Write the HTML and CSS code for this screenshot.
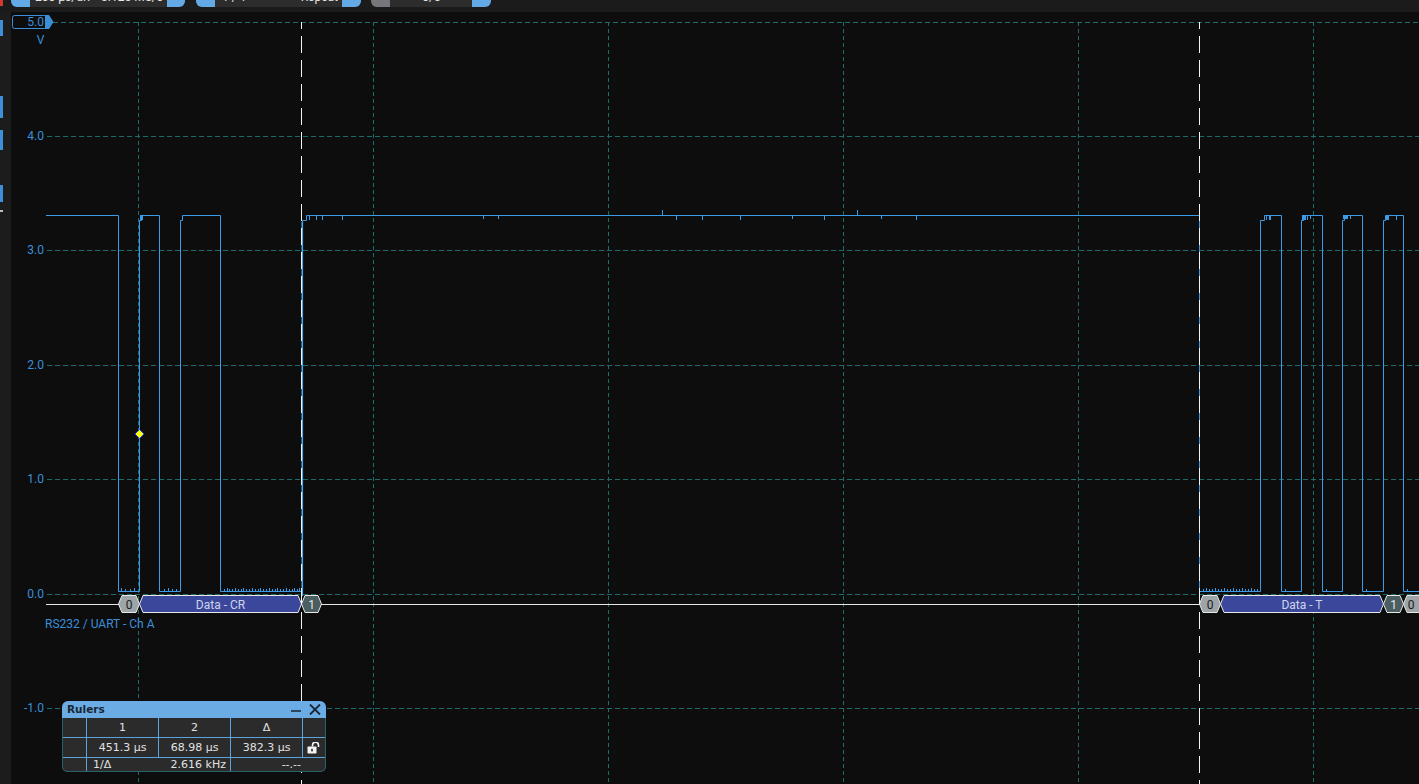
FILE: index.html
```html
<!DOCTYPE html>
<html lang="en">
<head>
<meta charset="utf-8">
<title>Scope</title>
<link rel="stylesheet" href="styles.css">
</head>
<body>
<div class="app">
  <header class="topbar">
    <span class="rec"></span>
    <div class="pill pill-1">
      <span class="cap"></span>
      <div class="pill-mid"><span>200 µs/div</span><span>3.125 MS/s</span></div>
      <span class="cap cap-r"></span>
    </div>
    <div class="pill pill-2">
      <span class="cap"></span>
      <div class="pill-mid pad-wide"><span>1 / 1</span><span>Repeat</span></div>
      <span class="cap"></span>
    </div>
    <div class="pill pill-3">
      <span class="cap cap-grey"></span>
      <div class="pill-mid center"><span>0/0</span></div>
      <span class="cap"></span>
    </div>
  </header>
  <div class="main">
    <aside class="rail">
      <span class="mark m1"></span>
      <span class="mark m2"></span>
      <span class="mark m3"></span>
      <span class="mark m4"></span>
      <span class="mark m5"></span>
    </aside>
    <section class="plot">
      <svg class="scope" width="1408" height="772" viewBox="11 12 1408 772" xmlns="http://www.w3.org/2000/svg">
        <path class="grid-h" d="M53 22.5H1419M47 136.5H1419M47 250.5H1419M47 365.5H1419M47 479.5H1419M47 594.5H1419M47 708.5H1419"/>
        <path class="grid-v" d="M138.5 22V784M373.5 22V784M608.5 22V784M843.5 22V784M1078.5 22V784M1313.5 22V784"/>

        <rect class="scale-box" x="12.5" y="15.5" width="34" height="13" rx="2"/>
        <polygon class="scale-arrow" points="45,15 49,15 53.5,22 49,29 45,29"/>
        <text class="tick-label" x="44" y="26">5.0</text>
        <text class="unit-label" x="40.5" y="44">V</text>
        <text class="tick-label" x="44" y="140">4.0</text>
        <text class="tick-label" x="44" y="254">3.0</text>
        <text class="tick-label" x="44" y="369">2.0</text>
        <text class="tick-label" x="44" y="483">1.0</text>
        <text class="tick-label" x="44" y="598">0.0</text>
        <text class="tick-label" x="44" y="712">-1.0</text>

        <path class="trace" d="M46 215.5H118.5V591.5H139.5V220.5H141.5V215.5H159.5V591.5H180.5V220.5H182.5V215.5H220.5V591.5H302.5V220.5H306.5V215.5H1199.5V591.5H1260.5V220.5H1264.5V215.5H1281.5V591.5H1301.5V220.5H1303.5V215.5H1322.5V591.5H1342.5V220.5H1344.5V215.5H1362.5V591.5H1383.5V220.5H1385.5V215.5H1403.5V591.5H1420"/>
        <path class="trace trace-bright" d="M302.3 222V596"/>
        <path class="trace" d="M309.5 215V220M316.5 215V220M322.5 215V220M342.5 215V220M483.5 215V219M498.5 215V219M662.5 215V210M676.5 215V220M702.5 215V220M740.5 215V220M792.5 215V219M824.5 215V220M857.5 215V210M881.5 215V219M916.5 215V220M1266.5 215V220M1307.5 215V220M1310.5 215V219M1350.5 215V219M1396.5 215V220M121.5 591V588M125.5 591V589M130.5 591V589M134.5 591V588M164.5 591V589M168.5 591V588M172.5 591V589M176.5 591V589M224.5 591V589M227.5 591V588M229.5 591V589M232.5 591V589M235.5 591V588M238.5 591V589M241.5 591V589M243.5 591V588M246.5 591V589M249.5 591V589M252.5 591V588M255.5 591V589M258.5 591V589M260.5 591V588M263.5 591V589M266.5 591V589M269.5 591V588M272.5 591V589M275.5 591V589M277.5 591V588M280.5 591V589M283.5 591V589M286.5 591V588M289.5 591V589M292.5 591V589M294.5 591V588M297.5 591V589M299.5 591V588M1203.5 591V589M1206.5 591V588M1209.5 591V589M1212.5 591V589M1215.5 591V588M1218.5 591V589M1221.5 591V589M1224.5 591V588M1227.5 591V589M1230.5 591V589M1233.5 591V588M1236.5 591V589M1239.5 591V589M1242.5 591V588M1245.5 591V589M1248.5 591V589M1251.5 591V588M1254.5 591V589M1257.5 591V589M1285.5 591V589M1326.5 591V589M1366.5 591V589M1407.5 591V589"/>
        <rect class="trace-fill" x="140" y="215" width="3" height="5"/>
        <rect class="trace-fill" x="1269" y="215" width="2" height="5"/>
        <rect class="trace-fill" x="1302" y="215" width="4" height="5"/>
        <rect class="trace-fill" x="1343" y="215" width="5" height="4"/>
        <rect class="trace-fill" x="1386" y="215" width="3" height="5"/>

        <path class="bus-line" d="M46 604.5H1419"/>
        <polygon class="hex hex-zero" points="118.5,604 122,595.5 136,595.5 139.5,604 136,612.5 122,612.5"/>
        <polygon class="hex hex-data" points="139.5,604 143,595.5 298,595.5 301.5,604 298,612.5 143,612.5"/>
        <polygon class="hex hex-one" points="301.5,604 305,595.5 318,595.5 321.5,604 318,612.5 305,612.5"/>
        <polygon class="hex hex-zero" points="1199.5,604 1203,595.5 1217,595.5 1220.5,604 1217,612.5 1203,612.5"/>
        <polygon class="hex hex-data" points="1220.5,604 1224,595.5 1380,595.5 1383.5,604 1380,612.5 1224,612.5"/>
        <polygon class="hex hex-one" points="1383.5,604 1387,595.5 1400,595.5 1403.5,604 1400,612.5 1387,612.5"/>
        <polygon class="hex hex-zero" points="1403.5,604 1407,595.5 1430,595.5 1430,612.5 1407,612.5"/>
        <text class="hex-text txt-zero" x="129" y="609">0</text>
        <text class="hex-text txt-data" x="220.5" y="609">Data - CR</text>
        <text class="hex-text txt-one" x="311.5" y="609">1</text>
        <text class="hex-text txt-zero" x="1210" y="609">0</text>
        <text class="hex-text txt-data" x="1302" y="609">Data - T</text>
        <text class="hex-text txt-one" x="1393.5" y="609">1</text>
        <text class="hex-text txt-zero" x="1411" y="609">0</text>
        <text class="bus-label" x="45" y="628">RS232 / UART - Ch A</text>

        <path class="cursor" d="M301.5 22V784M1199.5 22V784"/>
        <polygon class="marker" points="139.5,429.5 144,434 139.5,438.5 135,434"/>
      </svg>

      <div class="rulers">
        <div class="rulers-title">
          <span class="rulers-name">Rulers</span>
          <div class="win-btns">
            <svg class="btn-min" width="10" height="10" viewBox="0 0 10 10"><path d="M0 6H10"/></svg>
            <svg class="btn-close" width="12" height="11" viewBox="0 0 12 11"><path d="M1 0.5L11 10.5M11 0.5L1 10.5"/></svg>
          </div>
        </div>
        <div class="rulers-grid">
          <div class="cell"></div>
          <div class="cell">1</div>
          <div class="cell">2</div>
          <div class="cell">Δ</div>
          <div class="cell"></div>
          <div class="cell"></div>
          <div class="cell">451.3 µs</div>
          <div class="cell">68.98 µs</div>
          <div class="cell">382.3 µs</div>
          <div class="cell">
            <svg class="lock" width="14" height="12" viewBox="0 0 14 12">
              <path class="lock-shackle" d="M5.5 4.5V3.2a3 3 0 0 1 6 0V5"/>
              <rect class="lock-body" x="0.5" y="4.5" width="9" height="7" rx="0.8"/>
              <rect class="lock-hole" x="4.2" y="6.8" width="1.6" height="2.6"/>
            </svg>
          </div>
          <div class="cell"></div>
          <div class="cell pair"><span>1/Δ</span><span>2.616 kHz</span></div>
          <div class="cell dash">--.--</div>
        </div>
      </div>
    </section>
  </div>
</div>
</body>
</html>
```
FILE: styles.css
```css
* { box-sizing: border-box; }
html, body { margin: 0; padding: 0; }
body {
  width: 1419px;
  height: 784px;
  overflow: hidden;
  background: #0d0d0d;
  font-family: Roboto, "Liberation Sans", sans-serif;
}
.app { display: flex; flex-direction: column; height: 784px; }

/* top toolbar */
.topbar {
  height: 12px;
  flex: none;
  background: #1b1b1b;
  display: flex;
  align-items: flex-start;
}
.rec { width: 3px; height: 6px; background: #d23a30; margin-right: 8px; flex: none; }
.pill {
  height: 7px;
  flex: none;
  display: flex;
  border-radius: 0 0 6px 6px;
  overflow: hidden;
  background: #2c2c2c;
}
.pill-1 { width: 174px; margin-right: 11px; }
.pill-2 { width: 165px; margin-right: 10px; }
.pill-3 { width: 120px; }
.cap { width: 19px; flex: none; background: #63a9e6; }
.cap-r { width: 18px; }
.cap-grey { background: #77777b; }
.pill-mid {
  flex: 1;
  display: flex;
  justify-content: space-between;
  align-items: flex-start;
  padding: 0 4px 0 5px;
  overflow: hidden;
}
.pill-mid.pad-wide { padding-left: 7px; }
.pill-mid.center { justify-content: center; }
.pill-mid span {
  display: block;
  font-size: 12px;
  line-height: 12px;
  margin-top: -9px;
  color: #e4e4e4;
  white-space: nowrap;
}

/* main area */
.main { flex: 1; display: flex; min-height: 0; }
.rail {
  width: 11px;
  flex: none;
  background: #1c1c1c;
  display: flex;
  flex-direction: column;
}
.mark { display: block; width: 3px; background: #3d8fd9; flex: none; }
.m1 { margin-top: 8px; height: 16px; }
.m2 { margin-top: 60px; height: 22px; }
.m3 { margin-top: 12px; height: 20px; }
.m4 { margin-top: 35px; height: 17px; }
.m5 { margin-top: 8px; height: 2px; background: #bdbdbd; }

.plot { flex: 1; position: relative; background: #0d0d0d; overflow: hidden; }
.scope { display: block; }

/* svg parts */
.grid-h { fill: none; stroke: #1e6b6b; stroke-width: 1; stroke-dasharray: 5 3; }
.grid-v { fill: none; stroke: #1e6b6b; stroke-width: 1; stroke-dasharray: 4 3; }
.scale-box { fill: #0d0d0d; stroke: #3b8fd9; stroke-width: 1; }
.scale-arrow { fill: #3b8fd9; }
.tick-label {
  fill: #3b8fd9;
  font-family: Roboto, "Liberation Sans", sans-serif;
  font-size: 12px;
  text-anchor: end;
}
.unit-label {
  fill: #3b8fd9;
  font-family: Roboto, "Liberation Sans", sans-serif;
  font-size: 12px;
  text-anchor: middle;
}
.trace { fill: none; stroke: #3c9be6; stroke-width: 1; }
.trace-bright { stroke: #4aa9f2; stroke-width: 1.6; }
.trace-fill { fill: #3c9be6; }
.bus-line { fill: none; stroke: #e6e6e6; stroke-width: 1; }
.hex { stroke: #e8e8e8; stroke-width: 1; }
.hex-zero { fill: #9da5a8; }
.hex-data { fill: #3b479b; }
.hex-one { fill: #4b5e61; }
.hex-text {
  font-family: Roboto, "Liberation Sans", sans-serif;
  font-size: 12px;
  text-anchor: middle;
}
.txt-zero { fill: #1b1b1b; }
.txt-data { fill: #d0d4ef; }
.txt-one { fill: #e2e6e6; }
.bus-label {
  fill: #3b8fd9;
  font-family: Roboto, "Liberation Sans", sans-serif;
  font-size: 12px;
}
.cursor {
  fill: none;
  stroke: #f2f2f2;
  stroke-width: 1;
  stroke-dasharray: 17 7;
  stroke-dashoffset: 10;
}
.marker { fill: #ffff00; stroke: #2340ff; stroke-width: 1; }

/* rulers window */
.rulers {
  position: absolute;
  left: 51px;
  top: 689px;
  width: 264px;
  height: 71px;
  display: flex;
  flex-direction: column;
  border-radius: 6px 6px 5px 5px;
  overflow: hidden;
  font-family: "DejaVu Sans", "Noto Sans", sans-serif;
}
.rulers-title {
  height: 17px;
  flex: none;
  background: #6aace3;
  display: flex;
  align-items: center;
  padding: 0 5px 0 5px;
  color: #1a2634;
}
.rulers-name { flex: 1; font-weight: bold; font-size: 10.5px; line-height: 1; }
.win-btns { display: flex; align-items: center; gap: 8px; }
.btn-min path { stroke: #1a2634; stroke-width: 1.6; fill: none; }
.btn-close path { stroke: #1a2634; stroke-width: 1.8; fill: none; }

.rulers-grid {
  flex: 1;
  display: grid;
  grid-template-columns: 23px 71px 71px 71px 1fr;
  grid-template-rows: 19px 19px 1fr;
  gap: 1px;
  background: #5aa3dc;
  border: 1px solid #2a6068;
  border-top: none;
  border-radius: 0 0 5px 5px;
  overflow: hidden;
}
.cell {
  background: #2b2b2b;
  color: #e2e2e2;
  font-size: 11px;
  line-height: 1;
  display: flex;
  align-items: center;
  justify-content: center;
  white-space: nowrap;
}
.cell.pair { grid-column: 2 / 4; justify-content: space-between; padding: 0 4px 0 6px; }
.cell.dash { grid-column: 4 / 6; justify-content: flex-end; padding-right: 24px; }
.lock { display: block; }
.lock-shackle { fill: none; stroke: #f4f4f4; stroke-width: 1.6; }
.lock-body { fill: #f4f4f4; }
.lock-hole { fill: #2b2b2b; }
```
